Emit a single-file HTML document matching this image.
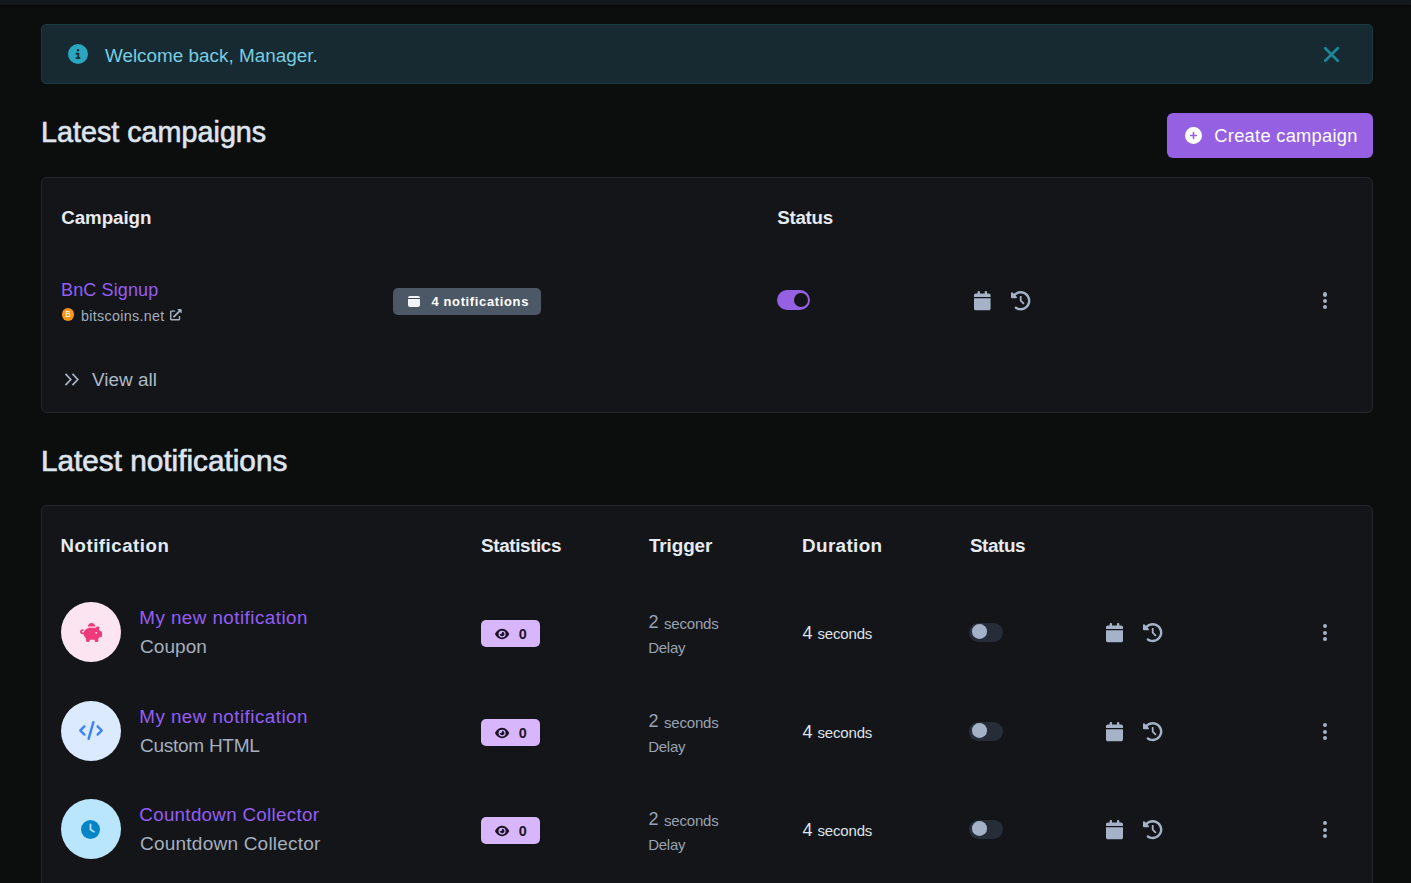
<!DOCTYPE html>
<html><head><meta charset="utf-8"><title>Dashboard</title>
<style>
html,body{margin:0;padding:0;width:1411px;height:883px;overflow:hidden;background:#0c0e0e;}
body{position:relative;font-family:"Liberation Sans",sans-serif;}
.t{position:absolute;white-space:nowrap;}
.b{position:absolute;box-sizing:content-box;}
.i{position:absolute;overflow:visible;}
</style></head><body>
<div class="b" style="left:0;top:0;width:1411px;height:5px;background:#14171b;box-shadow:0 1px 2px rgba(0,0,0,.5)"></div>
<div class="b" style="left:41px;top:24px;width:1330px;height:58px;background:#172a31;border:1px solid #193a40;border-radius:5px"></div>
<svg class="i" style="left:68.00px;top:44.00px;width:20.00px;height:20.00px;" viewBox="0 0 512 512" fill="#2aa6c0" preserveAspectRatio="none"><path d="M256 512A256 256 0 1 0 256 0a256 256 0 1 0 0 512zM216 336h24V272H216c-13.3 0-24-10.7-24-24s10.7-24 24-24h48c13.3 0 24 10.7 24 24v88h8c13.3 0 24 10.7 24 24s-10.7 24-24 24H216c-13.3 0-24-10.7-24-24s10.7-24 24-24zm40-208a32 32 0 1 1 0 64 32 32 0 1 1 0-64z"/></svg>
<div class="t" style="left:104.90px;top:46.90px;font-size:18.90px;line-height:18.90px;font-weight:400;color:#78cde1;letter-spacing:0px;">Welcome back, Manager.</div>
<svg class="i" style="left:1323px;top:46px;width:17px;height:17px" viewBox="0 0 17 17"><path d="M2.2 2.2L14.8 14.8M14.8 2.2L2.2 14.8" stroke="#1b8797" stroke-width="2.7" stroke-linecap="round"/></svg>
<div class="t" style="left:41.00px;top:117.03px;font-size:29.50px;line-height:29.50px;font-weight:400;color:#dee4ee;letter-spacing:0px;-webkit-text-stroke:0.65px #dee4ee;transform:scaleX(0.974);transform-origin:0 0">Latest campaigns</div>
<div class="b" style="left:1167px;top:113px;width:206px;height:45px;background:#9561e2;border-radius:6px"></div>
<svg class="i" style="left:1185.00px;top:127.00px;width:17.00px;height:17.00px;" viewBox="0 0 512 512" fill="#ffffff" preserveAspectRatio="none"><path d="M256 512A256 256 0 1 0 256 0a256 256 0 1 0 0 512zM232 344V280H168c-13.3 0-24-10.7-24-24s10.7-24 24-24h64V168c0-13.3 10.7-24 24-24s24 10.7 24 24v64h64c13.3 0 24 10.7 24 24s-10.7 24-24 24H280v64c0 13.3-10.7 24-24 24s-24-10.7-24-24z"/></svg>
<div class="b" style="left:1191.5px;top:131.5px;width:4px;height:8px;"></div>
<div class="t" style="left:1214.30px;top:127.41px;font-size:18.30px;line-height:18.30px;font-weight:400;color:#ffffff;letter-spacing:0.28px;">Create campaign</div>
<div class="b" style="left:41px;top:177px;width:1330px;height:234px;background:#131518;border:1px solid #24282d;border-radius:6px"></div>
<div class="t" style="left:61.30px;top:208.63px;font-size:18.75px;line-height:18.75px;font-weight:700;color:#e6eaf1;letter-spacing:-0.08px;">Campaign</div>
<div class="t" style="left:777.30px;top:208.73px;font-size:18.75px;line-height:18.75px;font-weight:700;color:#e6eaf1;letter-spacing:-0.3px;">Status</div>
<div class="t" style="left:61.00px;top:280.56px;font-size:18.00px;line-height:18.00px;font-weight:400;color:#955ef5;letter-spacing:0.13px;">BnC Signup</div>
<div class="b" style="left:61.7px;top:308.1px;width:12.6px;height:12.6px;border-radius:50%;background:#f7931a"></div>
<div class="t" style="left:65.30px;top:311.26px;font-size:8.20px;line-height:8.20px;font-weight:400;color:#fff;letter-spacing:0px;">B</div>
<div class="t" style="left:81.00px;top:308.52px;font-size:14.27px;line-height:14.27px;font-weight:400;color:#a4afbf;letter-spacing:0.32px;">bitscoins.net</div>
<svg class="i" style="left:170.30px;top:308.80px;width:11.70px;height:11.40px;" viewBox="0 0 512 512" fill="#a4afbf" preserveAspectRatio="none"><path d="M432,320H400a16,16,0,0,0-16,16V448H64V128H208a16,16,0,0,0,16-16V80a16,16,0,0,0-16-16H48A48,48,0,0,0,0,112V464a48,48,0,0,0,48,48H400a48,48,0,0,0,48-48V336A16,16,0,0,0,432,320ZM488,0h-128c-21.37,0-32.05,25.91-17,41l35.73,35.73L135,320.37a24,24,0,0,0,0,34L157.67,377a24,24,0,0,0,34,0L435.28,133.320,471,169c15,15,41,4.5,41-17V24A24,24,0,0,0,488,0Z"/></svg>
<div class="b" style="left:393px;top:288px;width:148px;height:27px;background:#4d5866;border-radius:5px"></div>
<div class="b" style="left:407.7px;top:295.9px;width:12.5px;height:10.8px;background:#f2f4f7;border-radius:2px"></div>
<div class="b" style="left:407.7px;top:297.6px;width:12.5px;height:1.6px;background:#3e4753"></div>
<div class="t" style="left:431.40px;top:295.74px;font-size:12.94px;line-height:12.94px;font-weight:700;color:#ffffff;letter-spacing:0.66px;">4 notifications</div>
<div class="b" style="left:777px;top:290px;width:33px;height:20px;background:#9561e2;border-radius:10px"></div>
<div class="b" style="left:793.6px;top:293px;width:14px;height:14px;background:#131518;border-radius:50%"></div>
<svg class="i" style="left:973.80px;top:290.80px;width:16.60px;height:19.20px;" viewBox="0 0 448 512" fill="#a5b2c7" preserveAspectRatio="none"><path d="M96 32V64H48C21.5 64 0 85.5 0 112v48H448V112c0-26.5-21.5-48-48-48H352V32c0-17.7-14.3-32-32-32s-32 14.3-32 32V64H160V32c0-17.7-14.3-32-32-32S96 14.3 96 32zM448 192H0V464c0 26.5 21.5 48 48 48H400c26.5 0 48-21.5 48-48V192z"/></svg>
<svg class="i" style="left:1011.30px;top:290.60px;width:19.40px;height:19.40px;" viewBox="0 0 512 512" fill="#a5b2c7" preserveAspectRatio="none"><path d="M75 75L41 41C25.9 25.9 0 36.6 0 57.9V168c0 13.3 10.7 24 24 24H134.1c21.4 0 32.1-25.9 17-41l-30.8-30.8C155 85.5 203 64 256 64c106 0 192 86 192 192s-86 192-192 192c-40.8 0-78.6-12.7-109.7-34.4c-14.5-10.1-34.4-6.6-44.6 7.9s-6.6 34.4 7.9 44.6C151.2 495 201.7 512 256 512c141.4 0 256-114.6 256-256S397.4 0 256 0C185.3 0 121.3 28.7 75 75zm181 53c-13.3 0-24 10.7-24 24V256c0 6.4 2.5 12.5 7 17l72 72c9.4 9.4 24.6 9.4 33.9 0s9.4-24.6 0-33.9l-65-65V152c0-13.3-10.7-24-24-24z"/></svg>
<div class="b" style="left:1322.90px;top:292.40px;width:4.2px;height:4.2px;border-radius:50%;background:#a5b2c7"></div>
<div class="b" style="left:1322.90px;top:298.60px;width:4.2px;height:4.2px;border-radius:50%;background:#a5b2c7"></div>
<div class="b" style="left:1322.90px;top:304.70px;width:4.2px;height:4.2px;border-radius:50%;background:#a5b2c7"></div>
<svg class="i" style="left:64px;top:372px;width:16px;height:15px" viewBox="0 0 16 15"><path d="M1.5 1.8L6.8 7.5L1.5 13.2M8.5 1.8L13.8 7.5L8.5 13.2" stroke="#a9b5c8" stroke-width="1.7" fill="none"/></svg>
<div class="t" style="left:92.00px;top:370.60px;font-size:18.90px;line-height:18.90px;font-weight:400;color:#aeb9c8;letter-spacing:0.04px;">View all</div>
<div class="t" style="left:41.20px;top:445.83px;font-size:29.50px;line-height:29.50px;font-weight:400;color:#dee4ee;letter-spacing:0px;-webkit-text-stroke:0.65px #dee4ee;transform:scaleX(1.008);transform-origin:0 0">Latest notifications</div>
<div class="b" style="left:41px;top:505px;width:1330px;height:420px;background:#131518;border:1px solid #24282d;border-radius:6px"></div>
<div class="t" style="left:60.50px;top:536.95px;font-size:18.60px;line-height:18.60px;font-weight:700;color:#e6eaf1;letter-spacing:0.55px;">Notification</div>
<div class="t" style="left:481.10px;top:536.70px;font-size:18.90px;line-height:18.90px;font-weight:700;color:#e6eaf1;letter-spacing:-0.4px;">Statistics</div>
<div class="t" style="left:648.90px;top:536.70px;font-size:18.90px;line-height:18.90px;font-weight:700;color:#e6eaf1;letter-spacing:-0.09px;">Trigger</div>
<div class="t" style="left:802.00px;top:536.70px;font-size:18.90px;line-height:18.90px;font-weight:700;color:#e6eaf1;letter-spacing:0.35px;">Duration</div>
<div class="t" style="left:969.90px;top:536.70px;font-size:18.90px;line-height:18.90px;font-weight:700;color:#e6eaf1;letter-spacing:-0.42px;">Status</div>
<div class="b" style="left:61px;top:602px;width:60px;height:60px;border-radius:50%;background:#fce4f1"></div>
<svg class="i" style="left:80.00px;top:622.50px;width:22.00px;height:19.00px;" viewBox="0 0 576 512" fill="#ee3a78" preserveAspectRatio="none"><path d="M400 96l0 .7c-5.3-.4-10.6-.7-16-.7H256c-16.5 0-32.5 2.1-47.8 6c-.1-2-.2-4-.2-6c0-53 43-96 96-96s96 43 96 96zm-16 32c3.5 0 7 .1 10.4 .3c4.2 .3 8.4 .7 12.6 1.3C424.6 109.1 450.8 96 480 96h11.5c10.4 0 18 9.8 15.5 19.9l-13.8 55.2c15.8 14.8 28.7 32.8 37.5 52.9H544c17.7 0 32 14.3 32 32v96c0 17.7-14.3 32-32 32H512c-9.1 12.1-19.9 22.9-32 32v64c0 17.7-14.3 32-32 32H416c-17.7 0-32-14.3-32-32V448H256v32c0 17.7-14.3 32-32 32H192c-17.7 0-32-14.3-32-32V416c-34.9-26.2-58.7-66.3-63.200-112H68c-37.6 0-68-30.4-68-68s30.4-68 68-68h4c13.3 0 24 10.7 24 24s-10.7 24-24 24H68c-11 0-20 9-20 20s9 20 20 20H99.2c12.100-59.8 57.700-107.5 116.300-122.8c12.900-3.400 26.500-5.200 40.500-5.200H384zm64 136a24 24 0 1 0 -48 0 24 24 0 1 0 48 0z"/></svg>
<div class="t" style="left:139.30px;top:608.63px;font-size:18.75px;line-height:18.75px;font-weight:400;color:#955ef5;letter-spacing:0.48px;">My new notification</div>
<div class="t" style="left:140.00px;top:637.08px;font-size:19.04px;line-height:19.04px;font-weight:400;color:#a4afbf;letter-spacing:0.04px;">Coupon</div>
<div class="b" style="left:481px;top:620px;width:59px;height:27px;background:#d7b6fb;border-radius:5px"></div>
<svg class="i" style="left:494.80px;top:628.40px;width:14.20px;height:12.00px;" viewBox="0 0 576 512" fill="#1d1429" preserveAspectRatio="none"><path d="M288 32c-80.8 0-145.5 36.8-192.6 80.6C48.6 156 17.3 208 2.5 243.7c-3.3 7.9-3.3 16.7 0 24.6C17.3 304 48.6 356 95.4 399.4C142.5 443.2 207.2 480 288 480s145.5-36.8 192.6-80.6c46.8-43.5 78.1-95.4 93-131.1c3.3-7.9 3.3-16.7 0-24.6c-14.9-35.7-46.2-87.7-93-131.1C433.5 68.8 368.8 32 288 32zM144 256a144 144 0 1 1 288 0 144 144 0 1 1 -288 0zm144-64c0 35.3-28.7 64-64 64c-7.1 0-13.9-1.2-20.3-3.3c-5.5-1.8-11.9 1.6-11.7 7.4c.3 6.9 1.3 13.8 3.2 20.7c13.7 51.2 66.4 81.6 117.6 67.9s81.6-66.4 67.9-117.6c-11.1-41.5-47.8-69.4-88.6-71.1c-5.8-.2-9.2 6.1-7.4 11.7c2.1 6.4 3.3 13.2 3.3 20.3z"/></svg>
<div class="t" style="left:518.80px;top:626.81px;font-size:14.40px;line-height:14.40px;font-weight:700;color:#1d1429;letter-spacing:0px;">0</div>
<div class="t" style="left:648.40px;top:613.16px;font-size:18.00px;line-height:18.00px;font-weight:400;color:#98a3b3;letter-spacing:0px;">2</div>
<div class="t" style="left:663.90px;top:615.70px;font-size:15.00px;line-height:15.00px;font-weight:400;color:#98a3b3;letter-spacing:-0.17px;">seconds</div>
<div class="t" style="left:648.30px;top:639.70px;font-size:15.00px;line-height:15.00px;font-weight:400;color:#98a3b3;letter-spacing:-0.3px;">Delay</div>
<div class="t" style="left:802.60px;top:623.76px;font-size:18.00px;line-height:18.00px;font-weight:400;color:#dde3ec;letter-spacing:0px;">4</div>
<div class="t" style="left:817.50px;top:626.30px;font-size:15.00px;line-height:15.00px;font-weight:400;color:#dde3ec;letter-spacing:-0.17px;">seconds</div>
<div class="b" style="left:969px;top:622.5px;width:34px;height:19px;background:#272d38;border-radius:10px"></div>
<div class="b" style="left:972px;top:624.4px;width:14.6px;height:14.6px;background:#a4b2c8;border-radius:50%"></div>
<svg class="i" style="left:1105.70px;top:622.90px;width:17.00px;height:19.20px;" viewBox="0 0 448 512" fill="#a5b2c7" preserveAspectRatio="none"><path d="M96 32V64H48C21.5 64 0 85.5 0 112v48H448V112c0-26.5-21.5-48-48-48H352V32c0-17.7-14.3-32-32-32s-32 14.3-32 32V64H160V32c0-17.7-14.3-32-32-32S96 14.3 96 32zM448 192H0V464c0 26.5 21.5 48 48 48H400c26.5 0 48-21.5 48-48V192z"/></svg>
<svg class="i" style="left:1143.00px;top:622.90px;width:19.40px;height:19.20px;" viewBox="0 0 512 512" fill="#a5b2c7" preserveAspectRatio="none"><path d="M75 75L41 41C25.9 25.9 0 36.6 0 57.9V168c0 13.3 10.7 24 24 24H134.1c21.4 0 32.1-25.9 17-41l-30.8-30.8C155 85.5 203 64 256 64c106 0 192 86 192 192s-86 192-192 192c-40.8 0-78.6-12.7-109.7-34.4c-14.5-10.1-34.4-6.6-44.6 7.9s-6.6 34.4 7.9 44.6C151.2 495 201.7 512 256 512c141.4 0 256-114.6 256-256S397.4 0 256 0C185.3 0 121.3 28.7 75 75zm181 53c-13.3 0-24 10.7-24 24V256c0 6.4 2.5 12.5 7 17l72 72c9.4 9.4 24.6 9.4 33.9 0s9.4-24.6 0-33.9l-65-65V152c0-13.3-10.7-24-24-24z"/></svg>
<div class="b" style="left:1322.90px;top:624.30px;width:4.2px;height:4.2px;border-radius:50%;background:#a5b2c7"></div>
<div class="b" style="left:1322.90px;top:630.50px;width:4.2px;height:4.2px;border-radius:50%;background:#a5b2c7"></div>
<div class="b" style="left:1322.90px;top:636.70px;width:4.2px;height:4.2px;border-radius:50%;background:#a5b2c7"></div>
<div class="b" style="left:61px;top:701px;width:60px;height:60px;border-radius:50%;background:#dbeafe"></div>
<svg class="i" style="left:79.00px;top:720.50px;width:24.00px;height:19.00px;" viewBox="0 0 640 512" fill="#3b82f6" preserveAspectRatio="none"><path d="M392.8 1.2c-17-4.9-34.7 5-39.6 22l-128 448c-4.9 17 5 34.7 22 39.6s34.7-5 39.6-22l128-448c4.9-17-5-34.7-22-39.6zm80.6 120.1c-12.5 12.5-12.5 32.8 0 45.3L562.7 256l-89.4 89.4c-12.5 12.5-12.5 32.8 0 45.3s32.8 12.5 45.3 0l112-112c12.5-12.5 12.5-32.8 0-45.3l-112-112c-12.5-12.5-32.8-12.5-45.3 0zm-306.7 0c-12.5-12.5-32.8-12.5-45.3 0l-112 112c-12.5 12.5-12.5 32.8 0 45.3l112 112c12.5 12.5 32.8 12.5 45.3 0s12.5-32.8 0-45.3L77.3 256l89.4-89.4c12.5-12.5 12.5-32.8 0-45.3z"/></svg>
<div class="t" style="left:139.30px;top:707.63px;font-size:18.75px;line-height:18.75px;font-weight:400;color:#955ef5;letter-spacing:0.48px;">My new notification</div>
<div class="t" style="left:140.00px;top:736.08px;font-size:19.04px;line-height:19.04px;font-weight:400;color:#a4afbf;letter-spacing:-0.28px;">Custom HTML</div>
<div class="b" style="left:481px;top:719px;width:59px;height:27px;background:#d7b6fb;border-radius:5px"></div>
<svg class="i" style="left:494.80px;top:727.40px;width:14.20px;height:12.00px;" viewBox="0 0 576 512" fill="#1d1429" preserveAspectRatio="none"><path d="M288 32c-80.8 0-145.5 36.8-192.6 80.6C48.6 156 17.3 208 2.5 243.7c-3.3 7.9-3.3 16.7 0 24.6C17.3 304 48.6 356 95.4 399.4C142.5 443.2 207.2 480 288 480s145.5-36.8 192.6-80.6c46.8-43.5 78.1-95.4 93-131.1c3.3-7.9 3.3-16.7 0-24.6c-14.9-35.7-46.2-87.7-93-131.1C433.5 68.8 368.8 32 288 32zM144 256a144 144 0 1 1 288 0 144 144 0 1 1 -288 0zm144-64c0 35.3-28.7 64-64 64c-7.1 0-13.9-1.2-20.3-3.3c-5.5-1.8-11.9 1.6-11.7 7.4c.3 6.9 1.3 13.8 3.2 20.7c13.7 51.2 66.4 81.6 117.6 67.9s81.6-66.4 67.9-117.6c-11.1-41.5-47.8-69.4-88.6-71.1c-5.8-.2-9.2 6.1-7.4 11.7c2.1 6.4 3.3 13.2 3.3 20.3z"/></svg>
<div class="t" style="left:518.80px;top:725.81px;font-size:14.40px;line-height:14.40px;font-weight:700;color:#1d1429;letter-spacing:0px;">0</div>
<div class="t" style="left:648.40px;top:712.16px;font-size:18.00px;line-height:18.00px;font-weight:400;color:#98a3b3;letter-spacing:0px;">2</div>
<div class="t" style="left:663.90px;top:714.70px;font-size:15.00px;line-height:15.00px;font-weight:400;color:#98a3b3;letter-spacing:-0.17px;">seconds</div>
<div class="t" style="left:648.30px;top:738.70px;font-size:15.00px;line-height:15.00px;font-weight:400;color:#98a3b3;letter-spacing:-0.3px;">Delay</div>
<div class="t" style="left:802.60px;top:722.76px;font-size:18.00px;line-height:18.00px;font-weight:400;color:#dde3ec;letter-spacing:0px;">4</div>
<div class="t" style="left:817.50px;top:725.30px;font-size:15.00px;line-height:15.00px;font-weight:400;color:#dde3ec;letter-spacing:-0.17px;">seconds</div>
<div class="b" style="left:969px;top:721.5px;width:34px;height:19px;background:#272d38;border-radius:10px"></div>
<div class="b" style="left:972px;top:723.4px;width:14.6px;height:14.6px;background:#a4b2c8;border-radius:50%"></div>
<svg class="i" style="left:1105.70px;top:721.90px;width:17.00px;height:19.20px;" viewBox="0 0 448 512" fill="#a5b2c7" preserveAspectRatio="none"><path d="M96 32V64H48C21.5 64 0 85.5 0 112v48H448V112c0-26.5-21.5-48-48-48H352V32c0-17.7-14.3-32-32-32s-32 14.3-32 32V64H160V32c0-17.7-14.3-32-32-32S96 14.3 96 32zM448 192H0V464c0 26.5 21.5 48 48 48H400c26.5 0 48-21.5 48-48V192z"/></svg>
<svg class="i" style="left:1143.00px;top:721.90px;width:19.40px;height:19.20px;" viewBox="0 0 512 512" fill="#a5b2c7" preserveAspectRatio="none"><path d="M75 75L41 41C25.9 25.9 0 36.6 0 57.9V168c0 13.3 10.7 24 24 24H134.1c21.4 0 32.1-25.9 17-41l-30.8-30.8C155 85.5 203 64 256 64c106 0 192 86 192 192s-86 192-192 192c-40.8 0-78.6-12.7-109.7-34.4c-14.5-10.1-34.4-6.6-44.6 7.9s-6.6 34.4 7.9 44.6C151.2 495 201.7 512 256 512c141.4 0 256-114.6 256-256S397.4 0 256 0C185.3 0 121.3 28.7 75 75zm181 53c-13.3 0-24 10.7-24 24V256c0 6.4 2.5 12.5 7 17l72 72c9.4 9.4 24.6 9.4 33.9 0s9.4-24.6 0-33.9l-65-65V152c0-13.3-10.7-24-24-24z"/></svg>
<div class="b" style="left:1322.90px;top:723.30px;width:4.2px;height:4.2px;border-radius:50%;background:#a5b2c7"></div>
<div class="b" style="left:1322.90px;top:729.50px;width:4.2px;height:4.2px;border-radius:50%;background:#a5b2c7"></div>
<div class="b" style="left:1322.90px;top:735.70px;width:4.2px;height:4.2px;border-radius:50%;background:#a5b2c7"></div>
<div class="b" style="left:61px;top:799px;width:60px;height:60px;border-radius:50%;background:#bae6fd"></div>
<svg class="i" style="left:81.00px;top:819.50px;width:19.00px;height:19.00px;" viewBox="0 0 512 512" fill="#0284c7" preserveAspectRatio="none"><path d="M256 0a256 256 0 1 1 0 512A256 256 0 1 1 256 0zM232 120V256c0 8 4 15.5 10.7 20l96 64c11 7.4 25.9 4.4 33.3-6.7s4.4-25.9-6.7-33.3L280 243.2V120c0-13.3-10.7-24-24-24s-24 10.7-24 24z"/></svg>
<div class="t" style="left:139.30px;top:805.63px;font-size:18.75px;line-height:18.75px;font-weight:400;color:#955ef5;letter-spacing:0.31px;">Countdown Collector</div>
<div class="t" style="left:140.00px;top:834.08px;font-size:19.04px;line-height:19.04px;font-weight:400;color:#a4afbf;letter-spacing:0.21px;">Countdown Collector</div>
<div class="b" style="left:481px;top:817px;width:59px;height:27px;background:#d7b6fb;border-radius:5px"></div>
<svg class="i" style="left:494.80px;top:825.40px;width:14.20px;height:12.00px;" viewBox="0 0 576 512" fill="#1d1429" preserveAspectRatio="none"><path d="M288 32c-80.8 0-145.5 36.8-192.6 80.6C48.6 156 17.3 208 2.5 243.7c-3.3 7.9-3.3 16.7 0 24.6C17.3 304 48.6 356 95.4 399.4C142.5 443.2 207.2 480 288 480s145.5-36.8 192.6-80.6c46.8-43.5 78.1-95.4 93-131.1c3.3-7.9 3.3-16.7 0-24.6c-14.9-35.7-46.2-87.7-93-131.1C433.5 68.8 368.8 32 288 32zM144 256a144 144 0 1 1 288 0 144 144 0 1 1 -288 0zm144-64c0 35.3-28.7 64-64 64c-7.1 0-13.9-1.2-20.3-3.3c-5.5-1.8-11.9 1.6-11.7 7.4c.3 6.9 1.3 13.8 3.2 20.7c13.7 51.2 66.4 81.6 117.6 67.9s81.6-66.4 67.9-117.6c-11.1-41.5-47.8-69.4-88.6-71.1c-5.8-.2-9.2 6.1-7.4 11.7c2.1 6.4 3.3 13.2 3.3 20.3z"/></svg>
<div class="t" style="left:518.80px;top:823.81px;font-size:14.40px;line-height:14.40px;font-weight:700;color:#1d1429;letter-spacing:0px;">0</div>
<div class="t" style="left:648.40px;top:810.16px;font-size:18.00px;line-height:18.00px;font-weight:400;color:#98a3b3;letter-spacing:0px;">2</div>
<div class="t" style="left:663.90px;top:812.70px;font-size:15.00px;line-height:15.00px;font-weight:400;color:#98a3b3;letter-spacing:-0.17px;">seconds</div>
<div class="t" style="left:648.30px;top:836.70px;font-size:15.00px;line-height:15.00px;font-weight:400;color:#98a3b3;letter-spacing:-0.3px;">Delay</div>
<div class="t" style="left:802.60px;top:820.76px;font-size:18.00px;line-height:18.00px;font-weight:400;color:#dde3ec;letter-spacing:0px;">4</div>
<div class="t" style="left:817.50px;top:823.30px;font-size:15.00px;line-height:15.00px;font-weight:400;color:#dde3ec;letter-spacing:-0.17px;">seconds</div>
<div class="b" style="left:969px;top:819.5px;width:34px;height:19px;background:#272d38;border-radius:10px"></div>
<div class="b" style="left:972px;top:821.4px;width:14.6px;height:14.6px;background:#a4b2c8;border-radius:50%"></div>
<svg class="i" style="left:1105.70px;top:819.90px;width:17.00px;height:19.20px;" viewBox="0 0 448 512" fill="#a5b2c7" preserveAspectRatio="none"><path d="M96 32V64H48C21.5 64 0 85.5 0 112v48H448V112c0-26.5-21.5-48-48-48H352V32c0-17.7-14.3-32-32-32s-32 14.3-32 32V64H160V32c0-17.7-14.3-32-32-32S96 14.3 96 32zM448 192H0V464c0 26.5 21.5 48 48 48H400c26.5 0 48-21.5 48-48V192z"/></svg>
<svg class="i" style="left:1143.00px;top:819.90px;width:19.40px;height:19.20px;" viewBox="0 0 512 512" fill="#a5b2c7" preserveAspectRatio="none"><path d="M75 75L41 41C25.9 25.9 0 36.6 0 57.9V168c0 13.3 10.7 24 24 24H134.1c21.4 0 32.1-25.9 17-41l-30.8-30.8C155 85.5 203 64 256 64c106 0 192 86 192 192s-86 192-192 192c-40.8 0-78.6-12.7-109.7-34.4c-14.5-10.1-34.4-6.6-44.6 7.9s-6.6 34.4 7.9 44.6C151.2 495 201.7 512 256 512c141.4 0 256-114.6 256-256S397.4 0 256 0C185.3 0 121.3 28.7 75 75zm181 53c-13.3 0-24 10.7-24 24V256c0 6.4 2.5 12.5 7 17l72 72c9.4 9.4 24.6 9.4 33.9 0s9.4-24.6 0-33.9l-65-65V152c0-13.3-10.7-24-24-24z"/></svg>
<div class="b" style="left:1322.90px;top:821.30px;width:4.2px;height:4.2px;border-radius:50%;background:#a5b2c7"></div>
<div class="b" style="left:1322.90px;top:827.50px;width:4.2px;height:4.2px;border-radius:50%;background:#a5b2c7"></div>
<div class="b" style="left:1322.90px;top:833.70px;width:4.2px;height:4.2px;border-radius:50%;background:#a5b2c7"></div>
</body></html>
